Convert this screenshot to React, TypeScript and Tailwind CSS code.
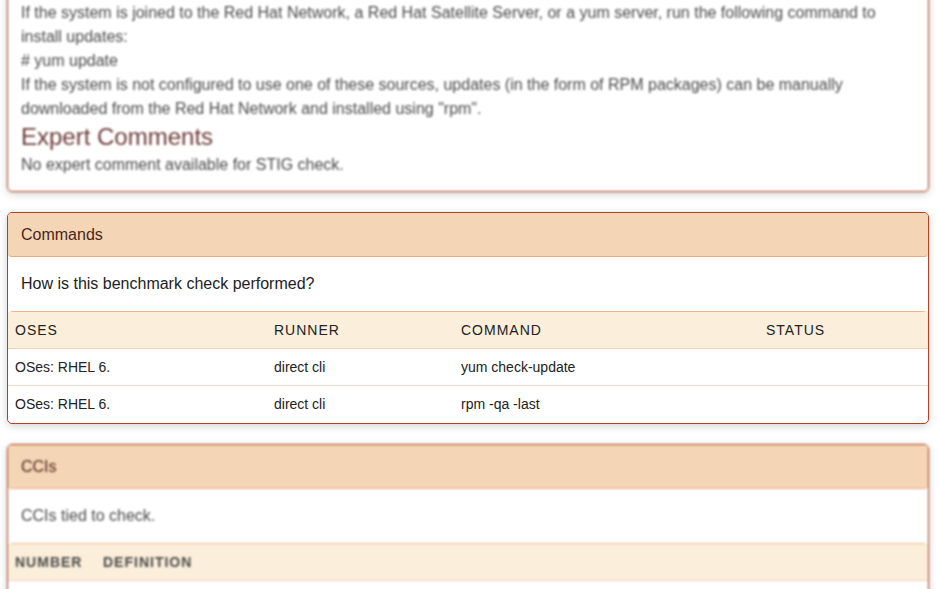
import React from 'react';

const commands = [
  { os: 'OSes: RHEL 6.', runner: 'direct cli', command: 'yum check-update', status: '' },
  { os: 'OSes: RHEL 6.', runner: 'direct cli', command: 'rpm -qa -last', status: '' },
];

function Card({ children, className = '' }: { children: React.ReactNode; className?: string }) {
  return (
    <div
      className={`w-[922px] rounded-[5px] border border-[#b2421f] bg-white shadow-[0_2px_8px_rgba(0,0,0,0.18)] overflow-hidden ${className}`}
    >
      {children}
    </div>
  );
}

function CardHeader({ title }: { title: string }) {
  return (
    <div className="h-[44px] flex items-center px-[13px] bg-[#f4d5b5] border-b border-[#e9a985] rounded-b-[4px] text-[16px] text-[#4a2519]">
      {title}
    </div>
  );
}

export default function App() {
  return (
    <div className="min-h-[589px] bg-white font-['Liberation_Sans',Arial,sans-serif] pl-[7px] overflow-hidden">
      {/* Description card (out of focus) */}
      <Card className="-mt-[12px] blur-[1.2px]">
        <div className="px-[13px] pt-[12px] pb-[14px] text-[16px] leading-[24px] text-[#4a4a4a]">
          <p>
            If the system is joined to the Red Hat Network, a Red Hat Satellite Server, or a yum server, run the
            following command to install updates:
          </p>
          <p># yum update</p>
          <p>
            If the system is not configured to use one of these sources, updates (in the form of RPM packages) can be
            manually downloaded from the Red Hat Network and installed using "rpm".
          </p>
          <h3 className="text-[24px] leading-[32px] text-[#6b3b36]">Expert Comments</h3>
          <p>No expert comment available for STIG check.</p>
        </div>
      </Card>

      {/* Commands card */}
      <Card className="mt-[20px]">
        <CardHeader title="Commands" />
        <div className="h-[54px] flex items-center px-[13px] text-[16px] text-[#222]">
          How is this benchmark check performed?
        </div>
        <div className="rounded-t-[5px] border-t border-[#f0b592]">
          <div className="grid grid-cols-[259px_187px_305px_1fr] h-[37px] items-center bg-[#fbeedb] border-b border-[#f2d2b6] text-[14px] tracking-[1px] text-[#222]">
            <div className="px-[7px]">OSES</div>
            <div className="px-[7px]">RUNNER</div>
            <div className="px-[7px]">COMMAND</div>
            <div className="px-[7px]">STATUS</div>
          </div>
          {commands.map((c, i) => (
            <div
              key={i}
              className={`grid grid-cols-[259px_187px_305px_1fr] h-[37px] items-center text-[14px] text-[#222] ${
                i < commands.length - 1 ? 'border-b border-[#f2dccb]' : ''
              }`}
            >
              <div className="px-[7px]">{c.os}</div>
              <div className="px-[7px]">{c.runner}</div>
              <div className="px-[7px]">{c.command}</div>
              <div className="px-[7px]">{c.status}</div>
            </div>
          ))}
        </div>
      </Card>

      {/* CCIs card (out of focus) */}
      <Card className="mt-[20px] blur-[1.2px]">
        <CardHeader title="CCIs" />
        <div className="h-[54px] flex items-center px-[13px] text-[16px] text-[#4a4a4a]">CCIs tied to check.</div>
        <div className="rounded-t-[5px] border-t border-[#f0b592]">
          <div className="flex h-[37px] items-center bg-[#fbeedb] border-b border-[#f2d2b6] text-[14px] tracking-[1px] text-[#4a4a4a] font-semibold">
            <div className="px-[7px] w-[88px]">NUMBER</div>
            <div className="px-[7px]">DEFINITION</div>
          </div>
          <div className="h-[37px]" />
        </div>
      </Card>
    </div>
  );
}
